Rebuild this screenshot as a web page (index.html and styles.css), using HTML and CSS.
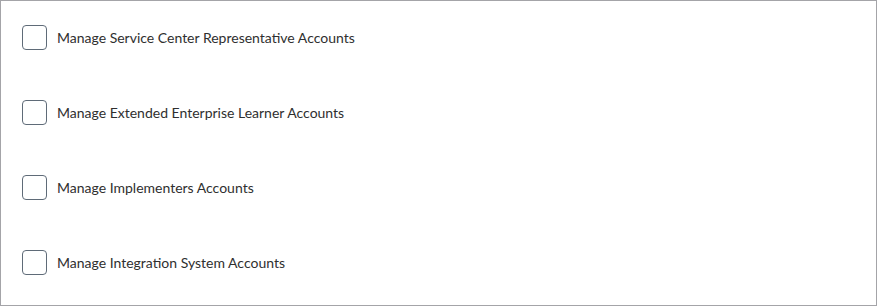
FILE: index.html
```html
<!DOCTYPE html>
<html lang="en">
<head>
    <meta charset="UTF-8">
    <meta name="viewport" content="width=device-width, initial-scale=1.0">
    <title>Account permissions</title>
    <link rel="stylesheet" href="styles.css">
</head>
<body>
    <div class="panel">
        <label class="option">
            <span class="box"></span>
            <span class="label-text">Manage Service Center Representative Accounts</span>
        </label>
        <label class="option">
            <span class="box"></span>
            <span class="label-text">Manage Extended Enterprise Learner Accounts</span>
        </label>
        <label class="option">
            <span class="box"></span>
            <span class="label-text">Manage Implementers Accounts</span>
        </label>
        <label class="option">
            <span class="box"></span>
            <span class="label-text">Manage Integration System Accounts</span>
        </label>
    </div>
</body>
</html>
```

FILE: styles.css
```css
body {
    margin: 0;
    background: #fff;
}
.panel {
    box-sizing: border-box;
    width: 877px;
    height: 306px;
    border: 1px solid #a4a4a8;
    padding: 0 21px;
    display: flex;
    flex-direction: column;
}
.option {
    box-sizing: border-box;
    height: 75px;
    padding-bottom: 2px;
    display: flex;
    align-items: center;
    gap: 11px;
    cursor: pointer;
}
.box {
    box-sizing: border-box;
    width: 25px;
    height: 25px;
    border: 1px solid #5f6b78;
    border-radius: 4px;
    flex-shrink: 0;
}
.label-text {
    font-family: "Lato", "Noto Sans", sans-serif;
    font-size: 14px;
    color: #2f2f2f;
    margin-left: -1px;
}
```
